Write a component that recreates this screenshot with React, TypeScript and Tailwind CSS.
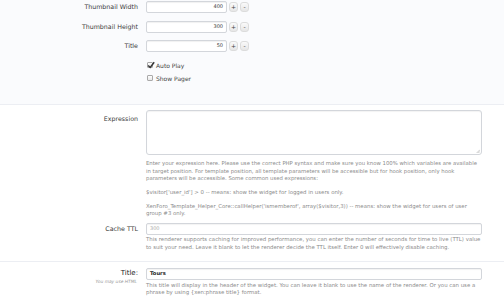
import React from "react";

const Stepper = ({ label, value, mt }: { label: string; value: string; mt: string }) => (
  <div className={`flex items-center ${mt}`}>
    <div className="w-[138px] text-right text-[6.3px] text-[#3a3a3a] leading-[12px]">{label}</div>
    <div className="ml-[8px] w-[81px] h-[12px] border border-[#d3d6db] rounded-[2px] bg-white shadow-[inset_0_1px_1px_rgba(0,0,0,0.06)] flex items-center justify-end pr-[3px] text-[5px] text-[#333]">
      {value}
    </div>
    <div className="ml-[2px] w-[9px] h-[10px] rounded-[3px] border border-[#dcdcdc] bg-gradient-to-b from-[#fafafa] to-[#e6e6e6] flex items-center justify-center text-[6px] leading-none text-[#444]">+</div>
    <div className="ml-[2px] w-[9px] h-[10px] rounded-[3px] border border-[#dcdcdc] bg-gradient-to-b from-[#fafafa] to-[#e6e6e6] flex items-center justify-center text-[6px] leading-none text-[#444]">-</div>
  </div>
);

const Check = ({ checked, label, mt }: { checked?: boolean; label: string; mt: string }) => (
  <div className={`flex items-center h-[8px] ${mt}`}>
    <div className="w-[147px]" />
    <div className="w-[6px] h-[6px] border border-[#a9a9a9] rounded-[1px] bg-gradient-to-b from-[#fdfdfd] to-[#e9e9e9] relative">
      {checked && (
        <svg viewBox="0 0 10 10" className="absolute left-[-1px] top-[-2px] w-[8px] h-[8px]">
          <path d="M1.5 5.5 L4 8 L9 1.5" fill="none" stroke="#333" strokeWidth="1.8" />
        </svg>
      )}
    </div>
    <div className="ml-[3px] text-[6px] text-[#444]">{label}</div>
  </div>
);

const Help = ({ children, mt, size = "text-[5.4px]" }: { children: React.ReactNode; mt: string; size?: string }) => (
  <p className={`${mt} ${size} leading-[7.6px] text-[#8c8c8c]`}>{children}</p>
);

export default function App() {
  return (
    <div className="w-[504px] h-[300px] overflow-hidden bg-white font-['DejaVu_Sans',sans-serif]">
      <div className="h-[105px] bg-[#fafbfd] border-b border-[#eceef3] pt-[1px]">
        <Stepper label="Thumbnail Width" value="400" mt="mt-0" />
        <Stepper label="Thumbnail Height" value="300" mt="mt-[8px]" />
        <Stepper label="Title" value="50" mt="mt-[7px]" />
        <Check checked label="Auto Play" mt="mt-[9px]" />
        <Check label="Show Pager" mt="mt-[5px]" />
      </div>

      <div className="flex pt-[5px]">
        <div className="w-[138px] text-right text-[6.3px] text-[#3a3a3a] pt-[3px] leading-[12px]">Expression</div>
        <div className="ml-[8px] w-[336px]">
          <div className="h-[45px] border border-[#d3d6db] rounded-[3px] bg-white shadow-[inset_0_1px_1px_rgba(0,0,0,0.05)] relative">
            <svg viewBox="0 0 6 6" className="absolute right-[1px] bottom-[1px] w-[4px] h-[4px]">
              <path d="M1 6 L6 1 M3.5 6 L6 3.5" stroke="#999" strokeWidth="0.8" />
            </svg>
          </div>
          <Help mt="mt-[5px]" size="text-[5.33px]">
            Enter your expression here. Please use the correct PHP syntax and make sure you know 100% which variables are available in target position. For template position, all template parameters will be accessible but for hook position, only hook parameters will be accessible. Some common used expressions:
          </Help>
          <Help mt="mt-[6.5px]">$visitor['user_id'] &gt; 0 -- means: show the widget for logged in users only.</Help>
          <Help mt="mt-[6px]">
            XenForo_Template_Helper_Core::callHelper('ismemberof', array($visitor,3)) -- means: show the widget for users of user group #3 only.
          </Help>
        </div>
      </div>

      <div className="flex mt-[5px]">
        <div className="w-[138px] text-right text-[6.3px] text-[#3a3a3a] leading-[12px]">Cache TTL</div>
        <div className="ml-[8px] w-[336px]">
          <div className="h-[12px] border border-[#d3d6db] rounded-[2px] bg-white shadow-[inset_0_1px_1px_rgba(0,0,0,0.05)] flex items-center pl-[3px] text-[5px] text-[#aaa]">
            300
          </div>
          <Help mt="mt-[1px]">
            This renderer supports caching for improved performance, you can enter the number of seconds for time to live (TTL) value to suit your need. Leave it blank to let the renderer decide the TTL itself. Enter 0 will effectively disable caching.
          </Help>
        </div>
      </div>

      <div className="mt-[10px] border-t border-[#eceef3] flex pt-[6px]">
        <div className="w-[138px] text-right">
          <div className="text-[7px] leading-[11px] text-[#222]">Title:</div>
          <div className="text-[4.4px] leading-[5px] italic text-[#9a9a9a] pr-[1px]">You may use HTML</div>
        </div>
        <div className="ml-[8px] w-[336px]">
          <div className="h-[12px] border border-[#d3d6db] rounded-[2px] bg-white shadow-[inset_0_1px_1px_rgba(0,0,0,0.05)] flex items-center pl-[3px] text-[5.2px] font-bold text-[#222]">
            Tours
          </div>
          <Help mt="mt-[1.5px]">
            This title will display in the header of the widget. You can leave it blank to use the name of the renderer. Or you can use a phrase by using {"{xen:phrase title}"} format.
          </Help>
        </div>
      </div>
    </div>
  );
}
